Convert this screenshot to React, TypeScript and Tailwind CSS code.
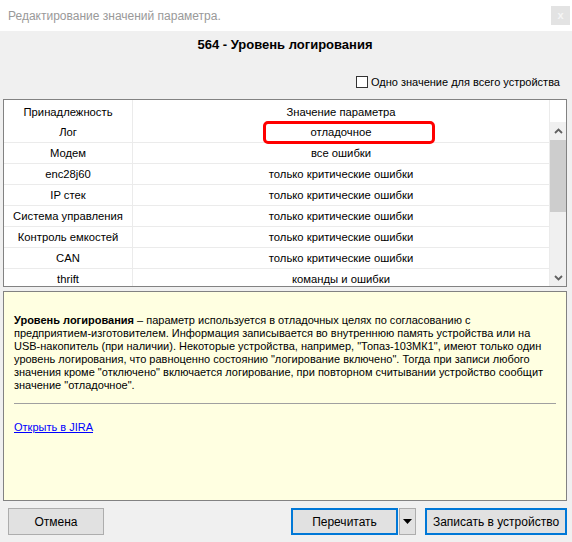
import React from 'react'

const rows = [
  { owner: 'Лог', value: 'отладочное', marked: true },
  { owner: 'Модем', value: 'все ошибки' },
  { owner: 'enc28j60', value: 'только критические ошибки' },
  { owner: 'IP стек', value: 'только критические ошибки' },
  { owner: 'Система управления', value: 'только критические ошибки' },
  { owner: 'Контроль емкостей', value: 'только критические ошибки' },
  { owner: 'CAN', value: 'только критические ошибки' },
  { owner: 'thrift', value: 'команды и ошибки' },
]

const descLines = [
  'предприятием-изготовителем. Информация записывается во внутреннюю память устройства или на',
  'USB-накопитель (при наличии). Некоторые устройства, например, "Топаз-103МК1", имеют только один',
  'уровень логирования, что равноценно состоянию "логирование включено". Тогда при записи любого',
  'значения кроме "отключено" включается логирование, при повторном считывании устройство сообщит',
  'значение "отладочное".',
]

function Chevron({ up }: { up?: boolean }) {
  return (
    <svg width="9" height="6" viewBox="0 0 9 6" className="block">
      <path
        d={up ? 'M1 5 L4.5 1.5 L8 5' : 'M1 1 L4.5 4.5 L8 1'}
        fill="none"
        stroke="#606060"
        strokeWidth="1.8"
      />
    </svg>
  )
}

export default function App() {
  return (
    <div
      className="w-[572px] h-[542px] bg-[#f0f0f0] flex flex-col overflow-hidden text-black"
      style={{ fontFamily: '"Liberation Sans", Arial, sans-serif' }}
    >
      {/* заголовок окна */}
      <div className="h-[31px] bg-white flex items-center justify-between pl-[8px] pr-[2px] shrink-0">
        <span className="text-[12px] text-[#999999]">Редактирование значений параметра.</span>
        <div className="w-[19px] h-[19px] bg-[#e3e3e3] flex items-center justify-center text-[11px] leading-none text-[#f5f5f5] font-bold">
          x
        </div>
      </div>

      <div className="flex-1 flex flex-col pl-[3px] pr-[5px]">
        <div className="pt-[6px] h-[22px] text-center text-[13px] leading-[16px] font-bold">
          564 - Уровень логирования
        </div>

        <div className="mt-[21px] h-[16px] flex items-center justify-end gap-[3px] pr-[7px]">
          <span className="w-[12px] h-[12px] border border-[#333333] bg-white" />
          <span className="text-[11px] leading-[16px]">Одно значение для всего устройства</span>
        </div>

        {/* таблица значений */}
        <div className="mt-[9px] h-[188px] border border-[#828282] bg-white flex overflow-hidden text-[11.25px]">
          <div className="flex flex-col w-[546px]">
            <div className="h-[22px] flex shrink-0">
              <div className="w-[129px] border-r border-[#ebebeb] flex items-center justify-center pt-[2px]">
                Принадлежность
              </div>
              <div className="w-[417px] border-r border-[#ebebeb] flex items-center justify-center pt-[2px]">
                Значение параметра
              </div>
            </div>
            {rows.map((r) => (
              <div key={r.owner} className="h-[21px] flex shrink-0 border-b border-[#ebebeb]">
                <div className="w-[129px] border-r border-[#ebebeb] flex items-center justify-center pt-[1px]">
                  {r.owner}
                </div>
                <div className="relative w-[417px] border-r border-[#ebebeb] flex items-center justify-center pt-[1px]">
                  {r.value}
                  {r.marked && (
                    <span className="absolute left-[130px] top-[-1px] w-[172px] h-[23px] border-[3px] border-[#ff0000] rounded-[5px]" />
                  )}
                </div>
              </div>
            ))}
          </div>
          <div className="flex-1 flex flex-col">
            <div className="h-[22px] bg-white shrink-0" />
            <div className="flex-1 bg-[#f0f0f0] flex flex-col">
              <div className="h-[18px] flex items-center justify-center">
                <Chevron up />
              </div>
              <div className="h-[72px] bg-[#cdcdcd]" />
              <div className="flex-1" />
              <div className="h-[17px] flex items-center justify-center">
                <Chevron />
              </div>
            </div>
          </div>
        </div>

        {/* описание параметра */}
        <div className="mt-[4px] h-[210px] border border-[#828282] bg-[#ffffe1] flex flex-col text-[11px] leading-[13px]">
          <div className="pt-[22px] px-[10px] whitespace-nowrap">
            <div>
              <b>Уровень логирования</b> – параметр используется в отладочных целях по согласованию с
            </div>
            {descLines.map((l) => (
              <div key={l}>{l}</div>
            ))}
          </div>
          <div className="mt-[11px] mx-[10px] h-px bg-[#a0a0a0]" />
          <div className="mt-[17px] px-[10px]">
            <a className="text-[#0000ff] underline">Открыть в JIRA</a>
          </div>
        </div>

        {/* кнопки */}
        <div className="mt-[7px] h-[27px] flex text-[12px]">
          <button className="ml-[5px] w-[96px] h-full bg-[#e1e1e1] border border-[#adadad]">Отмена</button>
          <div className="flex-1" />
          <button className="w-[107px] h-full bg-[#e1e1e1] border-2 border-[#0078d7]">Перечитать</button>
          <button className="ml-[1px] w-[17px] h-full bg-[#e1e1e1] border border-[#adadad] flex items-center justify-center">
            <svg width="9" height="5" viewBox="0 0 9 5">
              <path d="M0 0 H9 L4.5 5 Z" fill="#000" />
            </svg>
          </button>
          <button className="ml-[9px] w-[142px] h-full bg-[#e1e1e1] border-2 border-[#0078d7]">
            Записать в устройство
          </button>
        </div>
      </div>
    </div>
  )
}
